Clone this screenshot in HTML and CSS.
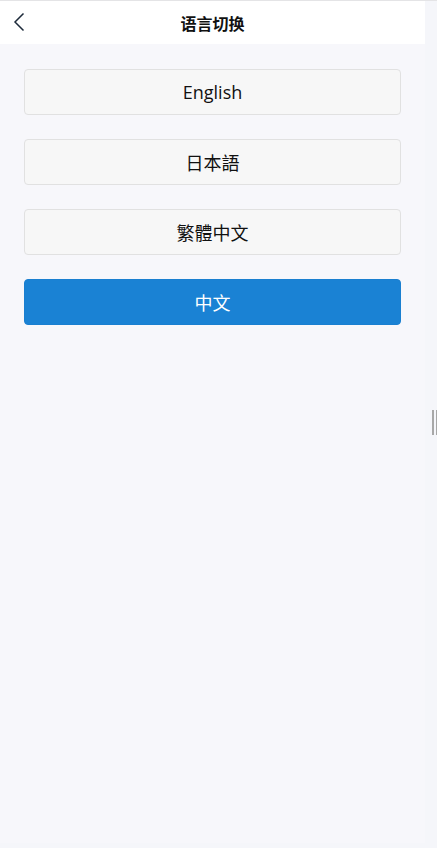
FILE: index.html
```html
<!DOCTYPE html>
<html lang="zh-CN">
<head>
    <meta charset="UTF-8">
    <meta name="viewport" content="width=device-width, initial-scale=1.0">
    <title>语言切换</title>
    <link rel="stylesheet" href="styles.css">
</head>
<body>
    <div class="page">
        <div class="app">
            <div class="header">
                <a class="back" href="#">
                    <svg width="12" height="20" viewBox="0 0 12 20">
                        <path d="M10.5 1.5 L2 10 L10.5 18.5" fill="none" stroke="#1d2a3a" stroke-width="1.5"/>
                    </svg>
                </a>
                <h1>语言切换</h1>
            </div>

            <div class="lang-list">
                <button class="lang">English</button>
                <button class="lang">日本語</button>
                <button class="lang">繁體中文</button>
                <button class="lang active">中文</button>
            </div>
        </div>
        <div class="side">
            <div class="handle"></div>
        </div>
    </div>
</body>
</html>
```

FILE: styles.css
```css
body {
    margin: 0;
    font-family: "Open Sans", "Noto Sans CJK SC", sans-serif;
    background: #f5f6fa;
    color: #111;
}
.page {
    display: flex;
    height: 848px;
    border-top: 1px solid #e4e4e6;
    box-sizing: border-box;
}
.app {
    width: 425px;
    background: #f7f7fb;
    height: 842px;
}
.side {
    flex: 1;
    display: flex;
    align-items: center;
    padding-left: 7px;
}
.handle {
    width: 2px;
    height: 25px;
    border-left: 2px solid #a8a8a8;
    border-right: 1px solid #a8a8a8;
    margin-top: -4px;
}
.header {
    position: relative;
    height: 43px;
    background: #fff;
    display: flex;
    align-items: center;
    justify-content: center;
}
.header h1 {
    margin: 0;
    font-size: 16px;
    font-weight: bold;
    font-family: "Noto Sans CJK SC", sans-serif;
}
.back {
    position: absolute;
    left: 13px;
    top: 11px;
}
.lang-list {
    display: flex;
    flex-direction: column;
    gap: 24px;
    padding: 25px 24px;
}
.lang {
    height: 46px;
    background: #f7f7f7;
    border: 1px solid #e1e1e1;
    border-radius: 4px;
    font-family: "Open Sans", "Noto Sans CJK SC", sans-serif;
    font-size: 18px;
    color: #111;
    padding: 0;
}
.lang.active {
    background: #1a82d4;
    border-color: #1a7fd0;
    color: #fff;
}
```
